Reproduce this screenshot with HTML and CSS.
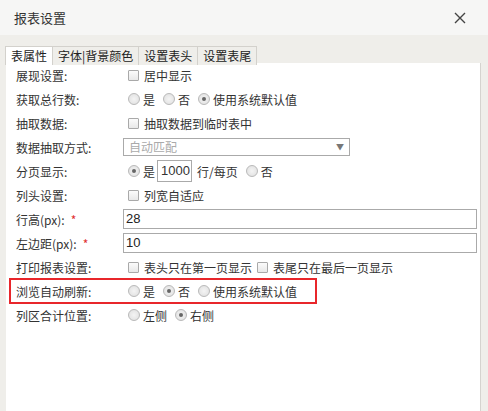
FILE: index.html
```html
<!DOCTYPE html>
<html lang="zh">
<head>
  <meta charset="UTF-8">
  <title>报表设置</title>
  <link rel="stylesheet" href="styles.css">
</head>
<body>

  <div class="title-bar">
    <span class="title">报表设置</span>
    <svg class="close" width="12" height="12" viewBox="0 0 12 12">
      <path d="M1 1L11 11M11 1L1 11" stroke="#444" stroke-width="1.4" fill="none"/>
    </svg>
  </div>

  <div class="dialog-body">
    <div class="tabs">
      <span class="tab active">表属性</span>
      <span class="tab">字体|背景颜色</span>
      <span class="tab">设置表头</span>
      <span class="tab">设置表尾</span>
    </div>

    <div class="panel">
      <div class="row">
        <span class="label">展现设置:</span>
        <span class="ctrl"><i class="cb"></i>居中显示</span>
      </div>
      <div class="row">
        <span class="label">获取总行数:</span>
        <span class="ctrl"><i class="rd"></i>是<i class="rd"></i>否<i class="rd on"></i>使用系统默认值</span>
      </div>
      <div class="row">
        <span class="label">抽取数据:</span>
        <span class="ctrl"><i class="cb"></i>抽取数据到临时表中</span>
      </div>
      <div class="row">
        <span class="label">数据抽取方式:</span>
        <span class="select">自动匹配<b class="arrow">&#9660;</b></span>
      </div>
      <div class="row">
        <span class="label">分页显示:</span>
        <span class="ctrl"><i class="rd on"></i>是<span class="small-input">1000</span>行/每页<i class="rd"></i>否</span>
      </div>
      <div class="row">
        <span class="label">列头设置:</span>
        <span class="ctrl"><i class="cb"></i>列宽自适应</span>
      </div>
      <div class="row">
        <span class="label">行高(px):<em class="req">*</em></span>
        <span class="text-input">28</span>
      </div>
      <div class="row">
        <span class="label">左边距(px):<em class="req">*</em></span>
        <span class="text-input">10</span>
      </div>
      <div class="row">
        <span class="label">打印报表设置:</span>
        <span class="ctrl"><i class="cb"></i>表头只在第一页显示<i class="cb"></i>表尾只在最后一页显示</span>
      </div>
      <div class="row highlight">
        <span class="label">浏览自动刷新:</span>
        <span class="ctrl"><i class="rd"></i>是<i class="rd on"></i>否<i class="rd"></i>使用系统默认值</span>
      </div>
      <div class="row">
        <span class="label">列区合计位置:</span>
        <span class="ctrl"><i class="rd"></i>左侧<i class="rd on"></i>右侧</span>
      </div>
    </div>
  </div>

</body>
</html>
```

FILE: styles.css
```css
body {
  margin: 0;
  width: 488px;
  height: 411px;
  overflow: hidden;
  font-family: "Microsoft YaHei", "Noto Sans CJK SC", "Liberation Sans", sans-serif;
  font-size: 12px;
  color: #333;
  background-color: #efeeea;
}

.title-bar {
  height: 35px;
  display: flex;
  align-items: center;
  justify-content: space-between;
  padding: 0 22px 0 14px;
  background-color: #f6f6f5;
}

.title {
  font-size: 13px;
  color: #333;
}

/* タブ */
.dialog-body {
  padding: 11px 7px 0 5px;
}

.tabs {
  display: flex;
  height: 19px;
}

.tab {
  padding: 0 5px;
  line-height: 18px;
  border: 1px solid #d3d1cc;
  border-bottom: none;
  margin-right: -1px;
  background-color: #efeeea;
  color: #222;
  font-size: 12px;
}

.tab.active {
  background-color: #fff;
  position: relative;
  z-index: 1;
}

.panel {
  background-color: #fff;
  border-right: 1px solid #d5d3cf;
  margin-left: 1px;
  padding: 0 0 0 4px;
  height: 360px;
}

.row {
  display: flex;
  align-items: center;
  height: 24px;
  padding-left: 6px;
}

.row:first-child {
  margin-top: -2px;
}

.row.highlight {
  outline: 2px solid #e8262b;
  outline-offset: -1px;
  width: 300px;
}

.label {
  width: 107px;
  flex-shrink: 0;
  color: #333;
}

.req {
  font-style: normal;
  color: #e03030;
  margin-left: 6px;
}

.ctrl {
  display: flex;
  align-items: center;
  color: #333;
  padding-left: 5px;
}

.cb {
  width: 9px;
  height: 9px;
  border: 1px solid #a9a9a9;
  border-radius: 1px;
  background: linear-gradient(#fbfbfb, #e8e8e8);
  margin: 0 5px 0 0;
}

.ctrl .cb ~ .cb {
  margin-left: 5px;
}

.rd {
  width: 10px;
  height: 10px;
  border: 1px solid #b9b9b9;
  border-radius: 50%;
  background: radial-gradient(#f4f4f4, #dedede);
  margin: 0 3px 0 0;
  position: relative;
}

.ctrl .rd ~ .rd {
  margin-left: 8px;
}

.rd.on::after {
  content: "";
  position: absolute;
  left: 3px;
  top: 3px;
  width: 4px;
  height: 4px;
  border-radius: 50%;
  background-color: #666;
}

.select {
  width: 215px;
  height: 16px;
  border: 1px solid #aaa;
  padding: 0 5px;
  line-height: 16px;
  color: #aaa;
  display: flex;
  justify-content: space-between;
}

.arrow {
  font-weight: normal;
  font-size: 8px;
  color: #777;
}

.small-input {
  width: 30px;
  height: 20px;
  line-height: 20px;
  border: 1px solid #aaa;
  padding-left: 3px;
  margin: 0 5px 0 2px;
  font-family: "Liberation Sans", sans-serif;
  font-size: 13px;
}

.text-input {
  width: 350px;
  height: 18px;
  line-height: 18px;
  border: 1px solid #aaa;
  padding-left: 2px;
  font-family: "Liberation Sans", sans-serif;
  font-size: 13px;
  color: #222;
}
```
